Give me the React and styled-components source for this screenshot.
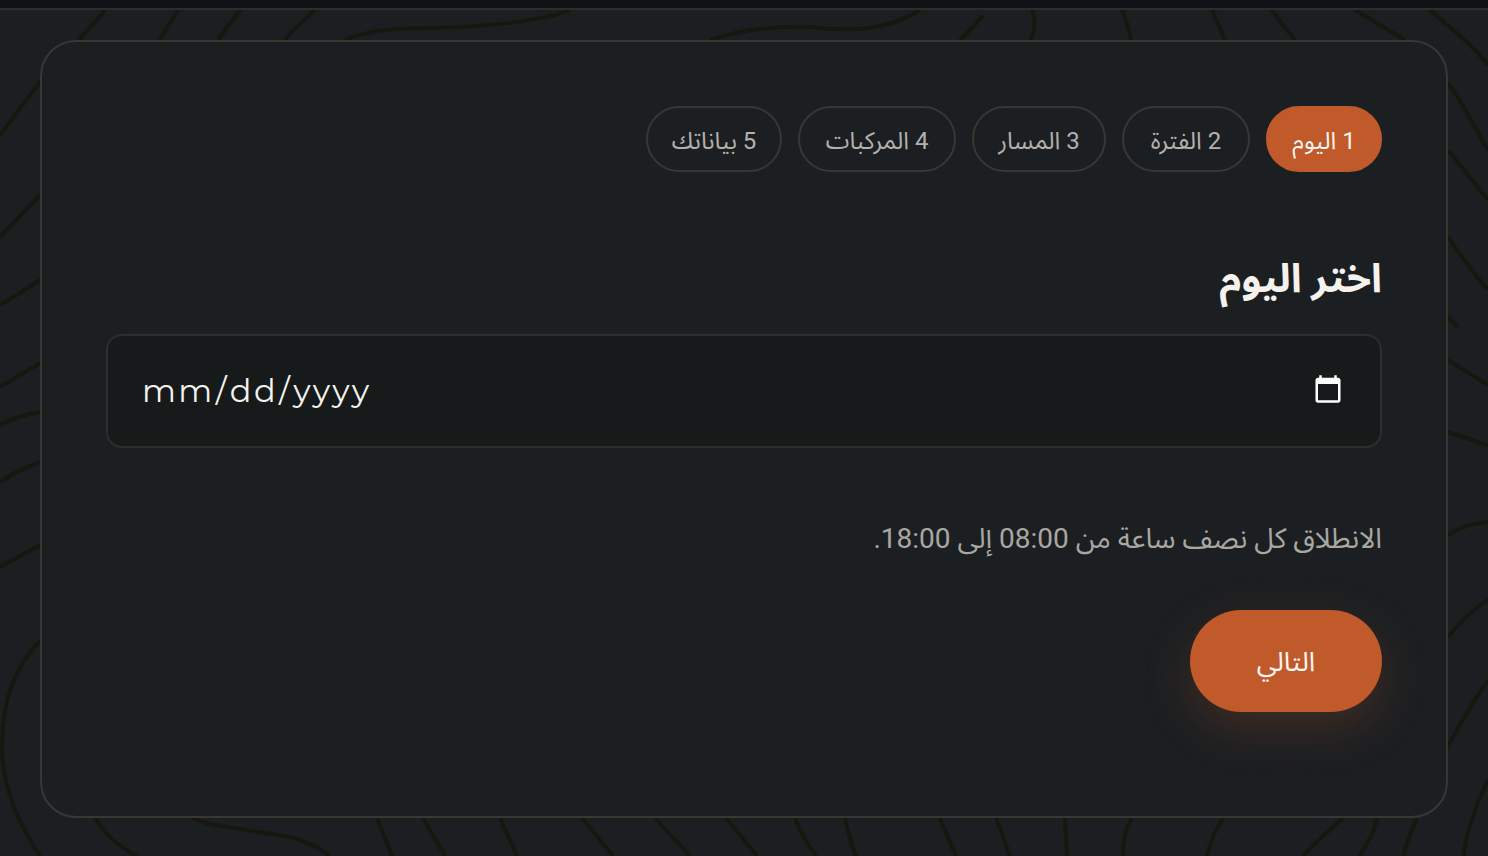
import React from "react";
import styled, { createGlobalStyle } from "styled-components";

const GlobalStyle = createGlobalStyle`
  html, body {
    margin: 0;
    padding: 0;
    background: #1b1f22;
  }
  * {
    box-sizing: border-box;
  }
`;

const Page = styled.div`
  position: relative;
  width: 100%;
  height: 856px;
  overflow: hidden;
  background: #1b1f22;
  font-family: Roboto, "Noto Sans Arabic", "Noto Sans", "DejaVu Sans", sans-serif;
`;
const Topo = styled.svg`
  position: absolute;
  inset: 0;
  width: 100%;
  height: 100%;
`;
const TopBar = styled.div`
  position: relative;
  height: 10px;
  background: #0f1315;
  border-bottom: 2px solid #2d2d29;
`;
const Main = styled.main`
  position: relative;
  padding: 30px 40px 38px;
`;
const Card = styled.section`
  height: 778px;
  padding: 64px 64px 0;
  background: #1c1f22;
  border: 2px solid #383731;
  border-radius: 36px;
`;
const Steps = styled.ol`
  display: flex;
  gap: 16px;
  margin: 0 0 82px;
  padding: 0;
  list-style: none;
`;
const Step = styled.li`
  width: ${(p) => p.$width}px;
  height: 66px;
  padding-top: 4px;
  display: flex;
  align-items: center;
  justify-content: center;
  border-radius: 33px;
  border: 2px solid ${(p) => (p.$active ? "#c05a2b" : "#383731")};
  background: ${(p) => (p.$active ? "#c05a2b" : "transparent")};
  color: ${(p) => (p.$active ? "#f7f4ef" : "#b3b1ac")};
  font-size: 24px;
  line-height: 34px;
`;
const Title = styled.h2`
  margin: 0 0 30px;
  font-size: 40px;
  line-height: 50px;
  font-weight: 700;
  color: #f5f2ed;
`;
const DateInput = styled.input`
  display: block;
  width: 100%;
  height: 114px;
  padding: 0 34px 2px 33px;
  background: #161a1b;
  border: 2px solid #2d2e2a;
  border-radius: 16px;
  outline: none;
  color: #f5f2ed;
  color-scheme: dark;
  font-family: Montserrat, Lato, sans-serif;
  font-size: 32px;
  letter-spacing: 2.4px;
`;
const Hint = styled.p`
  margin: 72px 0 52px;
  font-size: 28px;
  line-height: 38px;
  color: #a9a7a2;
`;
const NextButton = styled.button`
  display: block;
  width: 192px;
  height: 102px;
  padding-top: 3px;
  border: none;
  border-radius: 51px;
  background: #c05a2b;
  color: #f9f6f1;
  font-family: inherit;
  font-size: 27px;
  box-shadow: 0 16px 48px rgba(192, 90, 43, 0.22);
`;

const lines = [
  "M105 10 C90 30 65 52 40 82 L0 135",
  "M178 10 L160 40",
  "M240 10 L218 40",
  "M315 10 C300 24 290 32 285 40",
  "M345 40 C375 28 400 29 430 28 C480 27 540 22 570 10",
  "M710 40 C745 28 780 26 810 27 C850 32 890 30 920 10",
  "M960 40 L983 16",
  "M1032 10 C1036 20 1035 30 1031 40",
  "M1122 10 C1126 20 1130 30 1131 40",
  "M1212 10 L1225 40",
  "M1272 10 C1280 22 1288 32 1295 40",
  "M1355 10 L1405 40",
  "M1430 10 C1450 28 1470 42 1488 65",
  "M1448 83 C1465 105 1475 130 1488 150",
  "M1448 150 L1488 200",
  "M1448 237 C1462 258 1475 275 1488 290",
  "M1448 317 L1458 327",
  "M1448 360 L1488 385",
  "M1448 432 L1488 445",
  "M1448 535 C1460 527 1475 523 1488 522",
  "M1448 637 C1460 622 1475 608 1488 600",
  "M1448 747 C1460 722 1475 700 1488 680",
  "M1463 856 C1468 825 1478 800 1488 780",
  "M1123 856 C1123 840 1125 830 1132 818",
  "M1207 856 C1210 840 1216 830 1223 818",
  "M1303 856 C1315 842 1330 830 1343 818",
  "M1360 856 C1368 842 1375 830 1377 818",
  "M1403 856 C1407 842 1412 830 1417 818",
  "M1065 818 L1067 856",
  "M996 818 L1010 856",
  "M940 818 L956 856",
  "M845 818 C848 830 851 845 856 856",
  "M795 818 C800 832 808 845 816 856",
  "M726 818 L757 856",
  "M655 818 L690 856",
  "M582 818 L613 856",
  "M500 818 L517 856",
  "M423 818 L445 856",
  "M377 818 L392 856",
  "M192 818 C205 824 215 825 228 827 C250 831 275 834 293 838 C308 842 320 848 330 856",
  "M95 818 C105 835 120 847 137 856",
  "M40 641 C12 668 2 708 2 745 C2 790 20 825 40 856",
  "M0 237 L40 195",
  "M0 305 C12 298 28 288 40 280",
  "M0 387 L40 363",
  "M0 425 C12 419 26 414 40 412",
  "M0 482 C12 474 26 467 40 462",
  "M0 567 L40 545",
];

const steps = [
  { label: "1 اليوم", width: 116 },
  { label: "2 الفترة", width: 128 },
  { label: "3 المسار", width: 134 },
  { label: "4 المركبات", width: 158 },
  { label: "5 بياناتك", width: 136 },
];

const App = () => {
  return (
    <Page dir="rtl">
      <GlobalStyle />
      <Topo viewBox="0 0 1488 856" preserveAspectRatio="none" fill="none" stroke="#16170f" strokeWidth="4">
        {lines.map((d) => (
          <path key={d} d={d} />
        ))}
      </Topo>
      <TopBar />
      <Main>
        <Card>
          <Steps>
            {steps.map((s, i) => (
              <Step key={s.label} $active={i === 0} $width={s.width}>{s.label}</Step>
            ))}
          </Steps>
          <Title>اختر اليوم</Title>
          <DateInput type="date" dir="ltr" />
          <Hint>الانطلاق كل نصف ساعة من 08:00 إلى 18:00.</Hint>
          <NextButton>التالي</NextButton>
        </Card>
      </Main>
    </Page>
  );
};

export default App;
